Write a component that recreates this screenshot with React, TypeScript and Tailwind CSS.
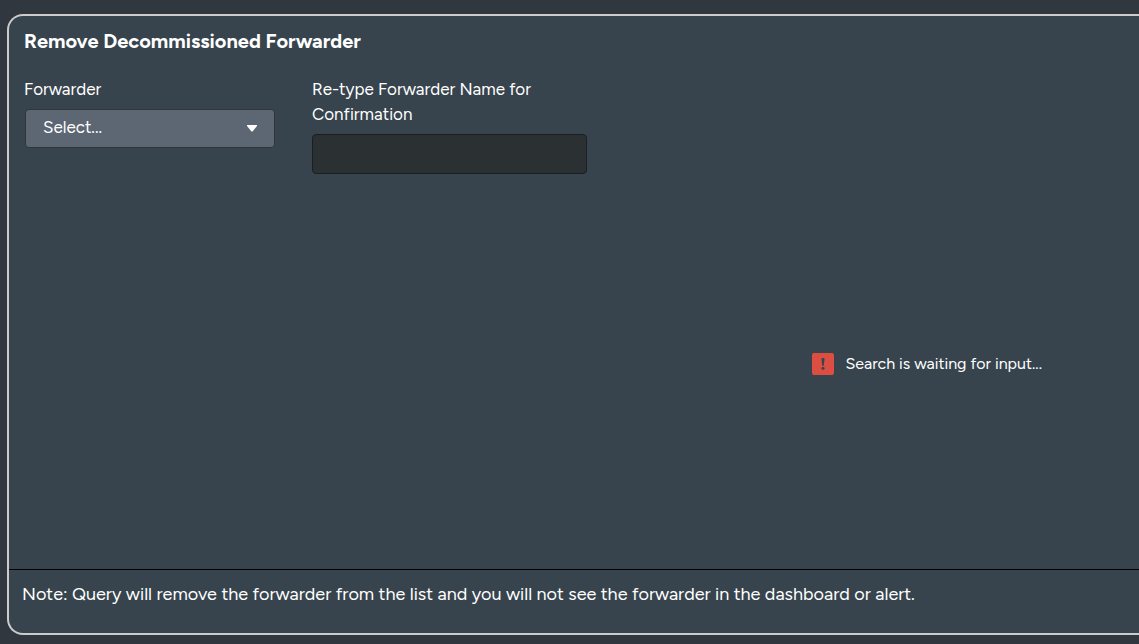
import { useState } from "react";

export default function App() {
  const [name, setName] = useState("");
  return (
    <div className="h-screen overflow-hidden bg-[#31373e] pt-3.5 pb-[9px] pl-[7px] font-['Proxima_Nova','Figtree','Inter',sans-serif] text-white">
      <main className="flex h-full flex-col rounded-l-2xl border-2 border-r-0 border-[#cccccc] bg-[#37444d]">
        <section className="flex min-h-0 flex-1 flex-col px-[15px] pt-3">
          <h1 className="text-[20px] leading-[26px] font-bold">Remove Decommissioned Forwarder</h1>
          <form className="mt-[23px] flex items-start gap-[37px]">
            <div className="flex w-[251px] flex-col">
              <label htmlFor="forwarder" className="text-[17px] leading-[25px]">Forwarder</label>
              <div className="relative mt-[7px] pl-px">
                <select id="forwarder" className="h-[39px] w-full appearance-none rounded border border-[#2f373d] bg-[#5c6773] pb-0.5 pl-[17px] text-[17px]">
                  <option>Select...</option>
                </select>
                <svg className="pointer-events-none absolute top-4 right-[17px] h-2 w-3" viewBox="0 0 12 8" fill="currentColor" aria-hidden="true">
                  <path d="M1 0h10v1L6.5 6.5h-1L1 1z" />
                </svg>
              </div>
            </div>
            <div className="flex w-[275px] flex-col">
              <label htmlFor="confirmation" className="text-[17px] leading-[25px]">Re-type Forwarder Name for Confirmation</label>
              <input id="confirmation" value={name} onChange={(e) => setName(e.target.value)} className="mt-[7px] h-10 rounded border border-[#1b1f21] bg-[#2b3033] px-3 text-[17px]" />
            </div>
          </form>
          <div className="mt-[178px] flex items-center justify-end gap-[11px] pr-[82px]" role="status">
            <svg className="size-[22px]" viewBox="0 0 22 22" aria-hidden="true">
              <rect width="22" height="22" rx="2" fill="#dc4e41" />
              <path d="M9.4 6Q9.4 5 11 5T12.6 6L11.6 13h-1.2z" fill="#37444d" />
              <ellipse cx="11" cy="15.4" rx="1.6" ry="1.3" fill="#37444d" />
            </svg>
            <p className="text-base leading-6">Search is waiting for input...</p>
          </div>
        </section>
        <footer className="border-t border-black px-[13px] pt-3 pb-[27px]">
          <p className="text-[18px] leading-6">Note: Query will remove the forwarder from the list and you will not see the forwarder in the dashboard or alert.</p>
        </footer>
      </main>
    </div>
  );
}
